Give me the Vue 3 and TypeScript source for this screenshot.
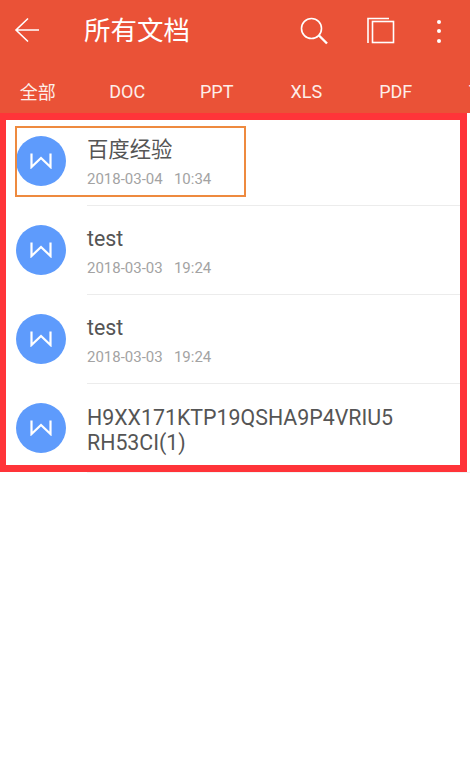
<template>
  <div class="page">
    <header class="appbar">
      <div class="toolbar">
        <svg class="back" width="26" height="28" viewBox="0 0 26 28" fill="none" stroke="#fff" stroke-width="1.6">
          <path d="M25 13H2M14 1.5 2 13l12 11.5" />
        </svg>
        <h1 class="title">所有文档</h1>
        <svg class="search" width="28" height="28" viewBox="0 0 28 28" fill="none" stroke="#fff">
          <circle cx="11.5" cy="11.5" r="10" stroke-width="1.6" />
          <path d="M19 18.5 27 26.5" stroke-width="2.4" />
        </svg>
        <svg class="copy" width="28" height="28" viewBox="0 0 28 28" fill="none" stroke="#fff" stroke-width="1.6">
          <path d="M1 26V1.5h21" />
          <rect x="5.5" y="4.5" width="21" height="21" />
        </svg>
        <div class="more"><i></i><i></i><i></i></div>
      </div>
      <nav class="tabs">
        <span v-for="tab in tabs" :key="tab" class="tab">{{ tab }}</span>
      </nav>
    </header>

    <section class="frame">
      <ul class="doc-list">
        <li v-for="(doc, index) in docs" :key="index" class="doc-row">
          <div class="avatar">
            <svg width="22" height="16" viewBox="0 0 22 16" fill="none" stroke="#fff" stroke-width="2.2">
              <path d="M1.5 0.5V14L11 5l9.5 9V0.5" />
            </svg>
          </div>
          <div class="doc-body">
            <div class="doc-name">{{ doc.name }}</div>
            <div v-if="doc.date" class="doc-date">{{ doc.date }}</div>
          </div>
        </li>
      </ul>
      <div class="highlight"></div>
    </section>
    <div class="next-line"></div>
  </div>
</template>

<script setup lang="ts">
interface Doc {
  name: string
  date?: string
}

const tabs = ['全部', 'DOC', 'PPT', 'XLS', 'PDF', 'TXT']

const docs: Doc[] = [
  { name: '百度经验', date: '2018-03-04\u00a0\u00a0\u00a010:34' },
  { name: 'test', date: '2018-03-03\u00a0\u00a0\u00a019:24' },
  { name: 'test', date: '2018-03-03\u00a0\u00a0\u00a019:24' },
  { name: 'H9XX171KTP19QSHA9P4VRIU5RH53CI(1)' }
]
</script>

<style>
html,
body {
  background: #fff;
}
</style>

<style scoped>
.page {
  width: 470px;
  height: 765px;
  overflow: hidden;
  background: #fff;
  font-family: Roboto, "Noto Sans CJK SC", sans-serif;
}

.appbar {
  height: 113px;
  background: #ea5237;
  color: #fff;
  overflow: hidden;
}

.toolbar {
  display: flex;
  align-items: center;
  height: 62px;
  padding-left: 14px;
}

.back {
  flex-shrink: 0;
}

.title {
  margin: 0 0 0 44px;
  font-size: 26.5px;
  font-weight: 400;
  line-height: 36px;
  width: 216px;
  flex-shrink: 0;
}

.search {
  flex-shrink: 0;
}

.copy {
  flex-shrink: 0;
  margin-left: 39px;
}

.more {
  display: flex;
  flex-direction: column;
  gap: 5.5px;
  margin-left: 42px;
}

.more i {
  display: block;
  width: 4px;
  height: 4px;
  border-radius: 50%;
  background: #fff;
}

.tabs {
  display: flex;
  margin-left: -7px;
  height: 40px;
  align-items: center;
  margin-top: 9px;
}

.tab {
  flex: 0 0 89.5px;
  text-align: center;
  font-size: 18px;
  color: #fdeee9;
}

.frame {
  position: relative;
  box-sizing: border-box;
  width: 467px;
  height: 359px;
  border: 7px solid #ff3439;
  border-left-width: 6px;
  overflow: hidden;
  background: #fff;
}

.doc-list {
  list-style: none;
  margin: -4px 0 0;
  padding: 0;
}

.doc-row {
  display: flex;
  align-items: center;
  box-sizing: border-box;
  height: 89px;
  padding-left: 10px;
}

.avatar {
  flex: 0 0 50px;
  height: 50px;
  border-radius: 50%;
  background: #5e9bfc;
  display: flex;
  align-items: center;
  justify-content: center;
}

.doc-body {
  flex: 1;
  align-self: stretch;
  margin: 0 0 -1px 21px;
  padding-top: 4px;
  display: flex;
  flex-direction: column;
  justify-content: center;
  border-bottom: 1px solid #ececec;
  min-width: 0;
}

.doc-row:last-child .doc-body {
  border-bottom: none;
}

.doc-name {
  font-size: 21.35px;
  line-height: 25px;
  color: #555;
  width: 315px;
  word-break: break-all;
}

.doc-date {
  margin-top: 8px;
  font-size: 15px;
  line-height: 18px;
  color: #a3a3a3;
}

.highlight {
  position: absolute;
  left: 9px;
  top: 6px;
  width: 231px;
  height: 71px;
  box-sizing: border-box;
  border: 2px solid #ee8a3f;
}

.next-line {
  height: 1px;
  margin-left: 87px;
  background: #f2f2f2;
}
</style>
